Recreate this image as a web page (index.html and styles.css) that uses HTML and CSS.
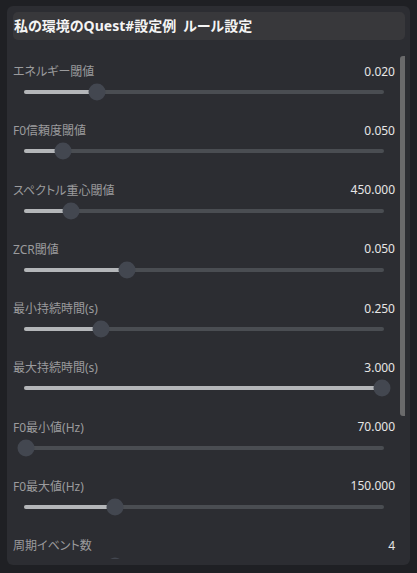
FILE: index.html
```html
<!DOCTYPE html>
<html lang="ja">
<head>
<meta charset="utf-8">
<link rel="stylesheet" href="styles.css">
</head>
<body>
<div class="panel">
  <div class="header"><span class="title">私の環境のQuest#設定例&ensp;ルール設定</span></div>
  <div class="scroll">
    <div class="rows">
      <div class="row"><div class="line"><span class="label">エネルギー閾値</span><span class="value">0.020</span></div><div class="slider"><div class="track"><div class="fill" style="width:calc(2px + 0.199 * (100% - 4px))"></div><div class="thumb" style="left:calc(2px + 0.199 * (100% - 4px))"></div></div></div></div>
      <div class="row"><div class="line"><span class="label">F0信頼度閾値</span><span class="value">0.050</span></div><div class="slider"><div class="track"><div class="fill" style="width:calc(2px + 0.104 * (100% - 4px))"></div><div class="thumb" style="left:calc(2px + 0.104 * (100% - 4px))"></div></div></div></div>
      <div class="row"><div class="line"><span class="label">スペクトル重心閾値</span><span class="value">450.000</span></div><div class="slider"><div class="track"><div class="fill" style="width:calc(2px + 0.126 * (100% - 4px))"></div><div class="thumb" style="left:calc(2px + 0.126 * (100% - 4px))"></div></div></div></div>
      <div class="row"><div class="line"><span class="label">ZCR閾値</span><span class="value">0.050</span></div><div class="slider"><div class="track"><div class="fill" style="width:calc(2px + 0.285 * (100% - 4px))"></div><div class="thumb" style="left:calc(2px + 0.285 * (100% - 4px))"></div></div></div></div>
      <div class="row"><div class="line"><span class="label">最小持続時間(s)</span><span class="value">0.250</span></div><div class="slider"><div class="track"><div class="fill" style="width:calc(2px + 0.21 * (100% - 4px))"></div><div class="thumb" style="left:calc(2px + 0.21 * (100% - 4px))"></div></div></div></div>
      <div class="row"><div class="line"><span class="label">最大持続時間(s)</span><span class="value">3.000</span></div><div class="slider"><div class="track"><div class="fill" style="width:calc(2px + 1 * (100% - 4px))"></div><div class="thumb" style="left:calc(2px + 1 * (100% - 4px))"></div></div></div></div>
      <div class="row"><div class="line"><span class="label">F0最小値(Hz)</span><span class="value">70.000</span></div><div class="slider"><div class="track"><div class="fill" style="width:calc(2px + 0 * (100% - 4px))"></div><div class="thumb" style="left:calc(2px + 0 * (100% - 4px))"></div></div></div></div>
      <div class="row"><div class="line"><span class="label">F0最大値(Hz)</span><span class="value">150.000</span></div><div class="slider"><div class="track"><div class="fill" style="width:calc(2px + 0.25 * (100% - 4px))"></div><div class="thumb" style="left:calc(2px + 0.25 * (100% - 4px))"></div></div></div></div>
      <div class="row"><div class="line"><span class="label">周期イベント数</span><span class="value">4</span></div><div class="slider"><div class="track"><div class="fill" style="width:calc(2px + 0.25 * (100% - 4px))"></div><div class="thumb" style="left:calc(2px + 0.25 * (100% - 4px))"></div></div></div></div>
    </div>
    <div class="scrollbar"></div>
  </div>
</div>
</body>
</html>
```

FILE: styles.css
```css
html, body {
  margin: 0;
  padding: 0;
  height: 100%;
  background: #1f2024;
  overflow: hidden;
}
body {
  font-family: "Noto Sans", "Noto Sans CJK JP", sans-serif;
  font-feature-settings: "palt";
  padding: 6px 7px 7px 7px;
  box-sizing: border-box;
}
.panel {
  height: 559px;
  width: 403px;
  background: #2c2d32;
  border-radius: 6px;
  padding: 6px 5px 6px 6px;
  box-sizing: border-box;
  display: flex;
  flex-direction: column;
  overflow: hidden;
}
.header {
  height: 28px;
  background: #38383b;
  border-radius: 5px;
  display: flex;
  align-items: center;
  padding-left: 1px;
  flex: none;
}
.title {
  color: #f4f4f4;
  font-weight: bold;
  font-size: 14px;
  line-height: 18px;
}
.scroll {
  position: relative;
  flex: 1;
  overflow: hidden;
  margin-top: 10px;
}
.rows {
  padding-top: 12px;
  width: 382px;
  display: flex;
  flex-direction: column;
  gap: 17.25px;
}
.row {
  display: flex;
  flex-direction: column;
}
.line {
  height: 18px;
  display: flex;
  justify-content: space-between;
  align-items: center;
  font-size: 12px;
}
.label {
  color: #9b9b9d;
}
.value {
  color: #e6e6e6;
}
.slider {
  height: 24px;
  padding: 0 11px;
  display: flex;
  align-items: center;
}
.track {
  position: relative;
  flex: 1;
  height: 4px;
  background: #4a4d52;
  border-radius: 2px;
}
.fill {
  height: 100%;
  background: #b4b6b9;
  border-radius: 2px;
}
.thumb {
  position: absolute;
  top: 50%;
  width: 17px;
  height: 17px;
  border-radius: 50%;
  background: #434750;
  transform: translate(-50%, -50%);
}
.scrollbar {
  position: absolute;
  top: 6px;
  right: -2px;
  width: 7px;
  height: 360px;
  background: #6a6a6b;
  border-radius: 3px;
}
```
